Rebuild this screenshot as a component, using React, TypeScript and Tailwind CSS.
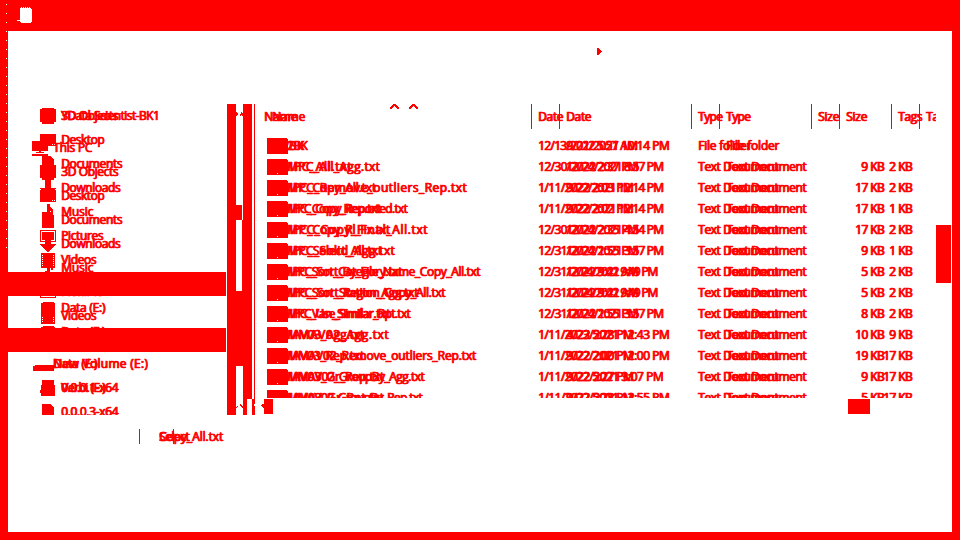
import { useLayoutEffect, useRef, type ReactNode } from "react";

const RED = "#ff0000";

/** Text whose tracking is adjusted so the run fills an exact width. */
function Fit({ text, w, className = "" }: { text: string; w: number; className?: string }) {
  const ref = useRef<HTMLSpanElement>(null);
  useLayoutEffect(() => {
    const el = ref.current;
    if (!el) return;
    el.style.letterSpacing = "0px";
    const natural = el.getBoundingClientRect().width;
    el.style.letterSpacing = `${(w - natural) / text.length}px`;
  }, [text, w]);
  return (
    <span ref={ref} className={`inline-block shrink-0 whitespace-pre ${className}`}>
      {text}
    </span>
  );
}

type IconName = "cube" | "desktop" | "pc" | "doc" | "down" | "music" | "picture" | "video" | "drive" | "folder" | "disk" | "none";

const shapes: Record<IconName, ReactNode> = {
  cube: <path d="M2 0h12v1h2v13h-2v2H2v-2H0V1h2z" />,
  desktop: <path fillRule="evenodd" d="M0 2h16v12H0zM12 12h1v1h-1zM14 12h1v1h-1z" />,
  pc: <path d="M0 1h16v10H9v1h3v1H4v-1h3v-1H0zM0 14h16v2H0z" />,
  doc: <path d="M2 0h9v1h1v1h1v1h1v13H2z" />,
  down: <path d="M5 0h6v8h5v1l-8 7-8-7V8h5z" />,
  music: <path d="M7 0h3v3l3 3v4h-2V7h-1v7H5v-3h2z" />,
  picture: <path fillRule="evenodd" d="M0 2h16v12H0zM1 3v10h14V3zM2 4h12v8H2z" />,
  video: <path fillRule="evenodd" d="M1 1h14v15H1zM2 3v1h1V3zm0 2v1h1V5zm0 2v1h1V7zm0 2v1h1V9zm0 2v1h1v-1zm0 2v1h1v-1zM13 3v1h1V3zm0 2v1h1V5zm0 2v1h1V7zm0 2v1h1V9zm0 2v1h1v-1zm0 2v1h1v-1z" />,
  drive: <path d="M3 2h11v1h1v13H1V3h2z" />,
  disk: <path d="M3 9h19v6H1v-5h2z" />,
  folder: <path d="M2 0h12v5h1v11H1v-3H0v-3h1V5h1z" />,
  none: null,
};

function Icon({ name }: { name: IconName }) {
  return (
    <svg width="16" height="16" viewBox="0 0 16 16" fill={RED} shapeRendering="crispEdges" className="shrink-0 overflow-visible">
      {shapes[name]}
    </svg>
  );
}

type Node = { t: string; w: number; icon: IconName; root?: boolean; band?: boolean; gap?: boolean };

const treeA: Node[] = [
  { t: "3D Objects", w: 57, icon: "cube" },
  { t: "Desktop", w: 43, icon: "desktop" },
  { t: "Documents", w: 61, icon: "doc" },
  { t: "Downloads", w: 59, icon: "down" },
  { t: "Music", w: 32, icon: "music" },
  { t: "Pictures", w: 42, icon: "picture" },
  { t: "Videos", w: 35, icon: "video" },
  { t: "Windows (C:)", w: 70, icon: "drive", band: true },
  { t: "Data (E:)", w: 44, icon: "drive" },
  { t: "Data (F:)", w: 44, icon: "drive" },
  { t: "Data (E:)", w: 44, icon: "disk", root: true, gap: true },
  { t: "0.0.0.1-x64", w: 57, icon: "folder" },
  { t: "0.0.0.3-x64", w: 57, icon: "doc" },
];

const treeB: Node[] = [
  { t: "YData Scientist-BK1", w: 98, icon: "cube" },
  { t: "This PC", w: 39, icon: "pc", root: true, gap: true },
  { t: "3D Objects", w: 57, icon: "cube" },
  { t: "Desktop", w: 43, icon: "desktop" },
  { t: "Documents", w: 61, icon: "doc" },
  { t: "Downloads", w: 59, icon: "down" },
  { t: "Music", w: 32, icon: "music" },
  { t: "Pictures", w: 42, icon: "picture" },
  { t: "Videos", w: 35, icon: "video" },
  { t: "Windows (C:)", w: 70, icon: "drive", band: true },
  { t: "New Volume (E:)", w: 95, icon: "none", root: true },
  { t: "Verbi (E:)", w: 44, icon: "folder" },
];

function Tree({ nodes, band }: { nodes: Node[]; band: string }) {
  return (
    <div className="col-start-1 row-start-1 flex flex-col">
      {nodes.map((n, i) => (
        <div
          key={i}
          className={`flex h-6 shrink-0 items-center gap-[5px] ${n.root ? "pl-6" : "pl-8"} ${n.gap ? "mt-2" : ""} ${n.band ? band : ""}`}
        >
          <Icon name={n.icon} />
          <Fit text={n.t} w={n.w} />
        </div>
      ))}
    </div>
  );
}

type File = { name: string; nw: number; date: string; dw: number; type: string; tw: number; size: string };

const doc = (name: string, nw: number, date: string, dw: number, size: string): File => ({
  name, nw, date, dw, type: "Text Document", tw: 80, size,
});

const filesA: File[] = [
  { name: "2BK", nw: 22, date: "12/13/2022 5:57 AM", dw: 99, type: "File folder", tw: 53, size: "" },
  doc("MPC_All.txt", 70, "12/30/2022 2:37 PM", 100, "9 KB"),
  doc("MPC_Copy_All.txt", 94, "1/11/2022 2:03 PM", 95, "17 KB"),
  doc("MPC_Copy_Rep.txt", 99, "1/11/2022 2:02 PM", 95, "17 KB"),
  doc("MPC_Copy_Rl_Fx.txt", 108, "12/30/2022 2:35 PM", 100, "17 KB"),
  doc("MPC_Select_All.txt", 100, "12/31/2022 1:55 PM", 100, "9 KB"),
  doc("MPC_Sort_Category.txt", 120, "12/31/2022 9:42 AM", 100, "5 KB"),
  doc("MPC_Sort_Station_Agg.txt", 136, "12/31/2022 9:42 AM", 100, "5 KB"),
  doc("MPC_Van_Similar.txt", 108, "12/31/2022 1:55 PM", 100, "8 KB"),
  doc("MAV03_Agg.txt", 82, "1/11/2022 5:28 PM", 95, "10 KB"),
  doc("MAV03_Rep.txt", 82, "1/11/2022 2:00 PM", 95, "19 KB"),
  doc("MAV03_Gr_Rep.txt", 102, "1/11/2022 5:27 PM", 95, "9 KB"),
  doc("MAV03_Gr_Rpt.txt", 102, "1/11/2022 5:28 PM", 95, "5 KB"),
];

const filesB: File[] = [
  { name: "2BK", nw: 20, date: "9/21/2021 10:14 PM", dw: 103, type: "File folder", tw: 53, size: "" },
  doc("MPC_All_Agg.txt", 93, "12/24/2021 8:57 PM", 97, "2 KB"),
  doc("MPC_Remove_outliers_Rep.txt", 180, "9/22/2021 12:14 PM", 97, "2 KB"),
  doc("MPC_Copy_Reported.txt", 120, "9/22/2021 12:14 PM", 97, "1 KB"),
  doc("MPC_Copy_Final_All.txt", 141, "12/24/2021 4:54 PM", 97, "2 KB"),
  doc("MPC_Solid_Agg.txt", 108, "12/24/2021 3:57 PM", 97, "1 KB"),
  doc("MPC_Sort_By_File_Name_Copy_All.txt", 193, "12/24/2021 9:49 PM", 91, "2 KB"),
  doc("MPC_Sort_Region_Copy_All.txt", 158, "12/24/2021 9:49 PM", 91, "2 KB"),
  doc("MPC_Use_Similar_Rpt.txt", 123, "12/24/2021 3:57 PM", 97, "2 KB"),
  doc("MMAV02_Agg.txt", 102, "4/23/2021 12:43 PM", 103, "9 KB"),
  doc("MMAV02_Remove_outliers_Rep.txt", 189, "9/22/2021 12:00 PM", 103, "17 KB"),
  doc("MMAV02_GroupBy_Agg.txt", 137, "9/22/2021 3:07 PM", 97, "17 KB"),
  doc("MMAV02_GroupBy_Rep.txt", 135, "9/22/2021 12:55 PM", 103, "17 KB"),
];

function List({ files, shifted }: { files: File[]; shifted?: boolean }) {
  return (
    <div className="col-start-1 row-start-1 flex flex-col">
      {files.map((f, i) => (
        <div key={i} className="flex h-[21px] shrink-0 items-center">
          <div className={`flex shrink-0 items-center ${shifted ? "w-[310px] pl-4" : "w-[282px] pl-[11px]"}`}>
            <svg width="16" height="16" viewBox="0 0 16 16" fill={RED} shapeRendering="crispEdges" className="shrink-0">
              <path d="M0 0h15v1h1v15H0z" />
              {shifted && i > 0 && <path fill="#fff" d="M5 14h1v1h-1z" />}
            </svg>
            <Fit text={f.name} w={f.nw} className={shifted ? "-ml-px" : "-ml-px"} />
          </div>
          <div className="w-40 shrink-0"><Fit text={f.date} w={f.dw} /></div>
          <div className="w-[120px] shrink-0"><Fit text={f.type} w={f.tw} /></div>
          <div className="flex w-[66px] shrink-0 justify-end">
            {f.size && <Fit text={f.size} w={f.size.length > 4 ? 29 : 23} />}
          </div>
        </div>
      ))}
    </div>
  );
}

function Header({ shifted }: { shifted?: boolean }) {
  return (
    <div className="col-start-1 row-start-1 flex h-[25px]">
      <div className={`flex shrink-0 items-center ${shifted ? "w-[303px] pl-4" : "w-[275px] pl-2"}`}>
        <Fit text="Name" w={33} />
      </div>
      {[["Date", 25, "w-40"], ["Type", 24, "w-[120px]"], ["Size", 21, "w-20"], ["Tags", 24, "w-20"]].map(([t, w, c]) => (
        <div key={t} className={`flex shrink-0 items-center border-l border-[#ff0000] pl-1.5 ${c}`}>
          <Fit text={String(t)} w={Number(w)} />
        </div>
      ))}
    </div>
  );
}

function Chevron({ className = "" }: { className?: string }) {
  return (
    <svg width="9" height="5" viewBox="0 0 9 5" fill={RED} shapeRendering="crispEdges" className={className}>
      <path d="M3 0h3v1h1v1h1v1h1v2H7V4H6V3H5V2H4v1H3v1H2v1H0V3h1V2h1V1h1z" />
    </svg>
  );
}

/** The two scroll bars and the splitter between the tree and the list. */
function Splitter() {
  return (
    <svg width="29" height="311" viewBox="0 0 29 311" fill={RED} shapeRendering="crispEdges" className="shrink-0">
      <path d="M1 0h9v311H1zM17 0h9v295H17zM17 295h4v16h-4zM28 0h1v295h-1z" />
      <path d="M10 101h6v15h-6zM16 116h1v71h-1zM10 187h7v75h-7z" />
      <path d="M10 8h1v1h1v2h-1v1h-1zM15 8h1v1h1v3h-1v-1h-1v1h-1v-2h1z" />
      <path d="M10 301h1v1h1v-1h-1zM10 303h1v-2h1v2h-1v1h-1zM14 300h1v1h1v1h1v2h-1v-1h-1v-1h-1z" />
      <path d="M26 295h3v5h-1v2h1v9h-3z" />
    </svg>
  );
}

export default function App() {
  return (
    <div className="flex h-[540px] w-[960px] flex-col overflow-hidden bg-[#ff0000] font-['Open_Sans','Noto_Sans',sans-serif] text-[12px] leading-4 text-[#ff0000] [-webkit-text-stroke:0.6px_#ff0000] [text-shadow:0.7px_0_0_#ff0000]">
      <div className="grid min-h-0 flex-1 grid-cols-[8px_944px_8px] grid-rows-[31px_501px_8px]">
        <div className="row-span-2 flex pl-1.5">
          <div className="h-[250px] w-px bg-[repeating-linear-gradient(to_bottom,#ff0000_0px,#ff0000_4px,#ffffff_4px,#ffffff_5px,#ff0000_5px,#ff0000_9px)]" />
        </div>
        <header className="col-start-2 row-start-1 flex pl-[9px] pt-[7px]">
          <svg width="15" height="16" viewBox="0 0 15 16" fill="#fff" shapeRendering="crispEdges">
            <path d="M4 0h1v1h1V0h1v1h1V0h1v1h1V0h1v1h1V0h1v1h1v1h1v13h-1v1H4v-1H3v-1H0v-1h3V1h1z" />
          </svg>
        </header>
        <main className="col-start-2 row-start-2 flex flex-col bg-white">
          <div className="flex h-[73px] shrink-0 pl-[589px] pt-[17px]">
            <svg width="5" height="7" viewBox="0 0 5 7" fill={RED} shapeRendering="crispEdges">
              <path d="M0 0h2v1h1v1h1v1h1v1H4v1H3v1H2v1H0V5V2z" />
            </svg>
          </div>
          <div className="flex h-[311px] shrink-0">
            <aside className="grid w-[218px] shrink-0 overflow-hidden">
              <Tree nodes={treeA} band="bg-[#ff0000]" />
              <Tree nodes={treeB} band="bg-[#ff0000]" />
            </aside>
            <Splitter />
            <section className="flex w-[681px] shrink-0 flex-col pl-px">
              <div className="grid h-[31px] shrink-0 overflow-hidden">
                <Header />
                <Header shifted />
                <div className="col-start-1 row-start-1 flex gap-[10px] pl-[134px]">
                  <Chevron />
                  <Chevron />
                </div>
              </div>
              <div className="grid h-[263px] shrink-0 overflow-hidden">
                <List files={filesA} />
                <List files={filesB} shifted />
              </div>
              <div className="flex h-[17px] items-start pl-[5px] pt-px">
                <svg width="12" height="15" viewBox="0 0 12 15" fill={RED} shapeRendering="crispEdges">
                  <path d="M3 0h9v15H3v-6H2V8H1V7H0V6h1V5h2z" />
                </svg>
                <div className="ml-[575px] h-[15px] w-[22px] bg-[#ff0000]" />
              </div>
            </section>
            <div className="w-4 shrink-0 pt-[121px]">
              <div className="h-[58px] w-[15px] bg-[#ff0000]" />
            </div>
          </div>
          <footer className="flex pl-[131px] pt-[14px]">
            <div className="h-[15px] w-px bg-[#ff0000]" />
            <div className="grid pl-[19px]">
              <Fit text="Select" w={30} className="col-start-1 row-start-1 justify-self-start" />
              <Fit text="Copy_All.txt" w={64} className="col-start-1 row-start-1 justify-self-start" />
              <div className="col-start-1 row-start-1 ml-[14px] h-[15px] w-px bg-[#ff0000]" />
            </div>
          </footer>
        </main>
      </div>
    </div>
  );
}
